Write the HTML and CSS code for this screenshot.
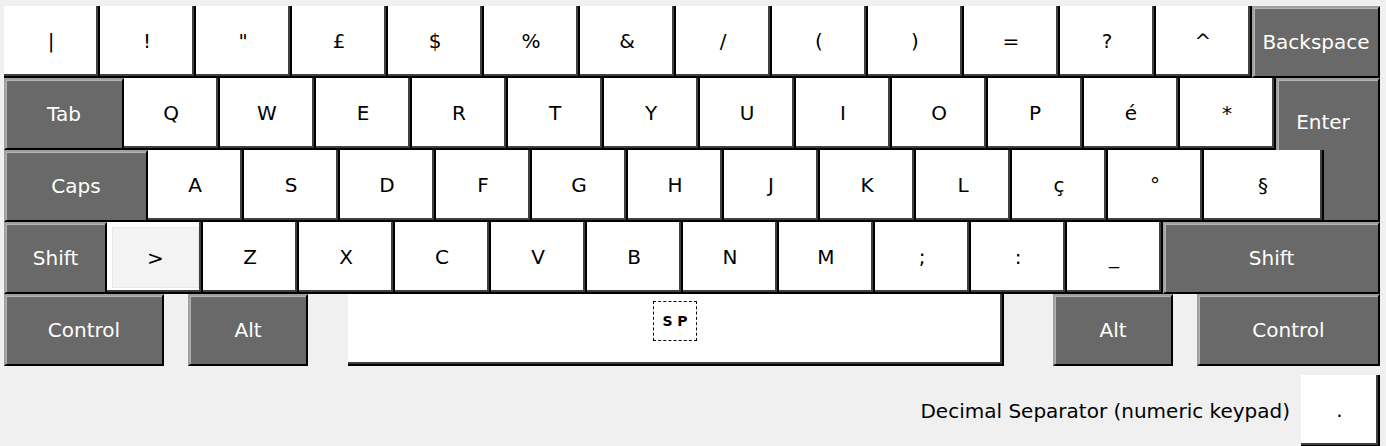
FILE: index.html
```html
<!DOCTYPE html>
<html>
<head>
<meta charset="utf-8">
<link rel="stylesheet" href="styles.css">
</head>
<body>
<div class="kb">
  <div class="row">
    <div class="key">|</div>
    <div class="key">!</div>
    <div class="key">"</div>
    <div class="key">£</div>
    <div class="key">$</div>
    <div class="key">%</div>
    <div class="key">&amp;</div>
    <div class="key">/</div>
    <div class="key">(</div>
    <div class="key">)</div>
    <div class="key">=</div>
    <div class="key">?</div>
    <div class="key">^</div>
    <div class="key dark w-back">Backspace</div>
  </div>
  <div class="mid">
    <div class="key dark enter">Enter</div>
    <div class="row r2">
      <div class="key dark w-tab">Tab</div>
      <div class="key">Q</div>
      <div class="key">W</div>
      <div class="key">E</div>
      <div class="key">R</div>
      <div class="key">T</div>
      <div class="key">Y</div>
      <div class="key">U</div>
      <div class="key">I</div>
      <div class="key">O</div>
      <div class="key">P</div>
      <div class="key">é</div>
      <div class="key">*</div>
    </div>
    <div class="row r3">
      <div class="key dark w-caps">Caps</div>
      <div class="key">A</div>
      <div class="key">S</div>
      <div class="key">D</div>
      <div class="key">F</div>
      <div class="key">G</div>
      <div class="key">H</div>
      <div class="key">J</div>
      <div class="key">K</div>
      <div class="key">L</div>
      <div class="key">ç</div>
      <div class="key">°</div>
      <div class="key w-sect">§</div>
    </div>
  </div>
  <div class="row">
    <div class="key dark w-lshift">Shift</div>
    <div class="key hl"><div class="hl-in">&gt;</div></div>
    <div class="key">Z</div>
    <div class="key">X</div>
    <div class="key">C</div>
    <div class="key">V</div>
    <div class="key">B</div>
    <div class="key">N</div>
    <div class="key">M</div>
    <div class="key">;</div>
    <div class="key">:</div>
    <div class="key">_</div>
    <div class="key dark w-rshift">Shift</div>
  </div>
  <div class="row">
    <div class="key dark w-lctrl">Control</div>
    <div class="key dark w-alt gap-24">Alt</div>
    <div class="key space gap-40"><div class="sp">S P</div></div>
    <div class="key dark w-alt gap-49">Alt</div>
    <div class="key dark w-rctrl gap-24">Control</div>
  </div>
  <div class="dec">
    <span class="dec-label">Decimal Separator (numeric keypad)</span>
    <div class="key w-dot">.</div>
  </div>
</div>
</body>
</html>
```

FILE: styles.css
```css
html {
  overflow: hidden;
}

body {
  margin: 0;
  background: #f0f0f0;
  font-family: "DejaVu Sans", "Liberation Sans", sans-serif;
  font-size: 20px;
  color: #000;
}

.kb {
  width: 1376px;
  padding: 6px 0 0 4px;
}

.row {
  display: flex;
  height: 72px;
}

.key {
  box-sizing: border-box;
  flex: none;
  width: 96px;
  height: 72px;
  display: flex;
  align-items: center;
  justify-content: center;
  background: #fff;
  color: #000;
  border-right: 2px solid #000;
  border-bottom: 2px solid #000;
  box-shadow: inset -2px -2px 0 #404040;
  white-space: nowrap;
}

.dark {
  background: #696969;
  color: #fff;
  border-left: 2px solid #a0a0a0;
  border-top: 2px solid #a0a0a0;
  box-shadow: inset 1px 1px 0 #b4b4b4;
}

.w-back { width: 128px; }
.w-tab { width: 120px; }
.w-caps { width: 144px; }
.w-sect { width: 120px; }
.w-lshift { width: 103px; }
.w-rshift { width: 217px; }
.w-lctrl { width: 160px; }
.w-alt { width: 120px; }
.w-rctrl { width: 183px; }
.w-dot { width: 79px; }

.gap-24 { margin-left: 24px; }
.gap-40 { margin-left: 40px; }
.gap-49 { margin-left: 49px; }

.mid {
  display: grid;
  grid-template-columns: 1272px 48px 56px;
  grid-template-rows: 72px 72px;
}

.enter {
  grid-column: 2 / 4;
  grid-row: 1 / 3;
  width: auto;
  height: auto;
  align-items: flex-start;
  padding-top: 30px;
  padding-right: 10px;
}

.r2 {
  grid-column: 1;
  grid-row: 1;
}

.r3 {
  grid-column: 1 / 3;
  grid-row: 2;
}

.hl {
  align-items: stretch;
  padding: 5px 2px 4px 5px;
}

.hl-in {
  flex: 1;
  display: flex;
  align-items: center;
  justify-content: center;
  background: #f3f3f3;
  border: 1px solid #e8e8e8;
}

.space {
  width: 656px;
  padding-bottom: 16px;
}

.sp {
  box-sizing: border-box;
  width: 44px;
  height: 40px;
  border: 1px dashed #000;
  display: flex;
  align-items: center;
  justify-content: center;
  font-size: 14px;
  font-weight: bold;
}

.dec {
  display: flex;
  justify-content: flex-end;
  align-items: center;
  height: 72px;
  margin-top: 9px;
}

.dec-label {
  margin-right: 11px;
}
```
